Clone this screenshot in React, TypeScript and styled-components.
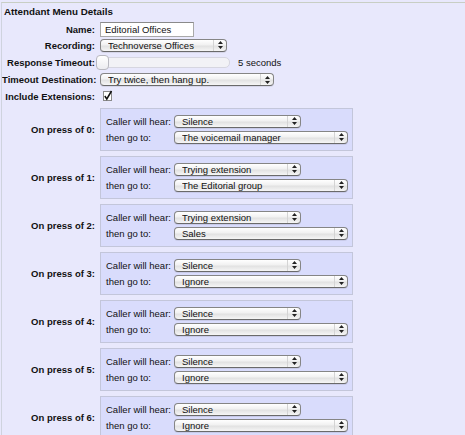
import React from 'react'
import styled, { createGlobalStyle } from 'styled-components'

const GlobalStyle = createGlobalStyle`
    body{
        margin:0;
        background:#e8e8fc;
        font-family:"Liberation Sans", Arial, sans-serif;
        font-size:9.5px;
        color:#111;
    }
`

const Frame = styled.div`
    margin:2px 0 0 1px;
    border-top:1px solid #c8cec4;
    border-left:1px solid #cfd3de;
    height:432px;
    overflow:hidden;
`

const Title = styled.div`
    font-weight:bold;
    font-size:9.8px;
    line-height:12px;
    padding:3px 0 3px 2px;
`

const FieldRow = styled.div<{ $h: number }>`
    display:grid;
    grid-template-columns:93px auto 1fr;
    column-gap:5px;
    align-items:center;
    height:${p => p.$h}px;
`

const Label = styled.div`
    font-weight:bold;
    text-align:right;
    white-space:nowrap;
`

const TextInput = styled.div`
    width:88px;
    height:13px;
    line-height:13px;
    padding-left:4px;
    background:#fff;
    border:1px solid #a9a9a9;
    border-top-color:#8a8a8a;
    white-space:nowrap;
`

const SelectBox = styled.div<{ $w: number }>`
    box-sizing:border-box;
    width:${p => p.$w}px;
    height:13px;
    display:flex;
    align-items:center;
    padding-left:7px;
    border:1px solid #858585;
    border-bottom-color:#6a6a6a;
    border-radius:4px;
    background:linear-gradient(#ffffff, #f1f1f1 45%, #e2e2e2 55%, #f6f6f6);
    box-shadow:0 1px 0 rgba(0,0,0,0.08);
    white-space:nowrap;
    .val{
        flex:1;
        overflow:hidden;
    }
    .arrows{
        width:12px;
        height:100%;
        border-left:1px solid #d4d4d4;
        display:flex;
        align-items:center;
        justify-content:center;
    }
`

const SliderWrap = styled.div`
    display:flex;
    align-items:center;
    margin-left:-4px;
    gap:8px;
    .track{
        position:relative;
        width:132px;
        height:9px;
        border:1px solid #d6d6e0;
        border-radius:5px;
        background:#f2f2f6;
    }
    .thumb{
        position:absolute;
        left:-1px;
        top:-3px;
        width:11px;
        height:13px;
        border:1px solid #b8b8c0;
        border-radius:4px;
        background:linear-gradient(#ffffff, #ececf0);
    }
`

const Check = styled.div`
    margin-left:3px;
    width:7px;
    height:8px;
    border:1px solid #8a8a8a;
    background:#fff;
    position:relative;
    svg{
        position:absolute;
        left:-1px;
        top:-2px;
    }
`

const PressRow = styled.div<{ $first?: boolean }>`
    display:grid;
    grid-template-columns:93px 253px;
    column-gap:5px;
    align-items:center;
    height:43px;
    margin-top:${p => (p.$first ? 4 : 5)}px;
`

const PressBox = styled.div`
    box-sizing:border-box;
    height:43px;
    background:#d9dcfc;
    border:1px solid #c3c6da;
    padding:4px 4px 5px 5px;
    display:grid;
    grid-template-columns:67px auto;
    grid-auto-rows:16px;
    column-gap:1px;
    align-items:center;
    white-space:nowrap;
`

const Arrows = () => (
    <svg width="5" height="8" viewBox="0 0 5 8">
        <path d="M2.5 0 L5 3 L0 3 Z M0 5 L5 5 L2.5 8 Z" fill="#222" />
    </svg>
)

const Select: React.FC<{ w: number; value: string }> = ({ w, value }) => (
    <SelectBox $w={w}>
        <span className='val'>{value}</span>
        <span className='arrows'><Arrows /></span>
    </SelectBox>
)

const presses = [
    { hear: 'Silence', go: 'The voicemail manager' },
    { hear: 'Trying extension', go: 'The Editorial group' },
    { hear: 'Trying extension', go: 'Sales' },
    { hear: 'Silence', go: 'Ignore' },
    { hear: 'Silence', go: 'Ignore' },
    { hear: 'Silence', go: 'Ignore' },
    { hear: 'Silence', go: 'Ignore' },
]

const App: React.FC = () => {
    return (
        <>
            <GlobalStyle />
            <Frame>
                <Title>Attendant Menu Details</Title>
                <FieldRow $h={16}>
                    <Label>Name:</Label>
                    <TextInput>Editorial Offices</TextInput>
                </FieldRow>
                <FieldRow $h={16}>
                    <Label>Recording:</Label>
                    <Select w={127} value='Technoverse Offices' />
                </FieldRow>
                <FieldRow $h={18}>
                    <Label>Response Timeout:</Label>
                    <SliderWrap>
                        <div className='track'><div className='thumb' /></div>
                        <span>5 seconds</span>
                    </SliderWrap>
                </FieldRow>
                <FieldRow $h={17}>
                    <Label>Timeout Destination:</Label>
                    <Select w={174} value='Try twice, then hang up.' />
                </FieldRow>
                <FieldRow $h={16}>
                    <Label>Include Extensions:</Label>
                    <Check>
                        <svg width="10" height="11" viewBox="0 0 10 11">
                            <path d="M1.8 6 L3.8 9 L8.5 1" stroke="#111" strokeWidth="1.5" fill="none" />
                        </svg>
                    </Check>
                </FieldRow>
                {presses.map((p, i) => (
                    <PressRow key={i} $first={i === 0}>
                        <Label>On press of {i}:</Label>
                        <PressBox>
                            <span>Caller will hear:</span>
                            <Select w={127} value={p.hear} />
                            <span>then go to:</span>
                            <Select w={174} value={p.go} />
                        </PressBox>
                    </PressRow>
                ))}
            </Frame>
        </>
    )
}

export default App
